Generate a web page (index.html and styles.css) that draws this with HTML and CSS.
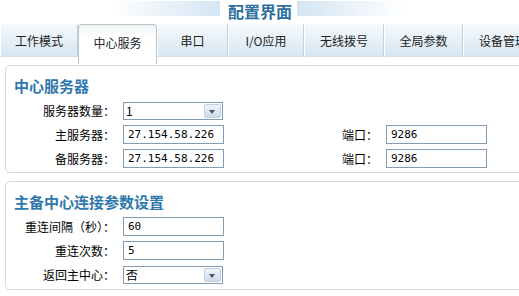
FILE: index.html
```html
<!DOCTYPE html>
<html lang="zh-CN">
<head>
    <meta charset="UTF-8">
    <title>配置界面</title>
    <link rel="stylesheet" href="styles.css">
</head>
<body>
    <div class="page">
        <header class="title-bar">
            <span class="title-fade left"></span>
            <h1>配置界面</h1>
            <span class="title-fade right"></span>
        </header>

        <nav class="tabs">
            <a class="tab">工作模式</a>
            <a class="tab active">中心服务</a>
            <a class="tab">串口</a>
            <a class="tab">I/O应用</a>
            <a class="tab">无线拨号</a>
            <a class="tab">全局参数</a>
            <a class="tab">设备管理</a>
        </nav>

        <section class="panel">
            <h2>中心服务器</h2>
            <div class="form-grid">
                <label>服务器数量：</label>
                <div class="select"><span class="select-value">1</span><span class="select-btn"></span></div>
                <span></span><span></span>

                <label>主服务器：</label>
                <input type="text" value="27.154.58.226">
                <label>端口：</label>
                <input type="text" value="9286">

                <label>备服务器：</label>
                <input type="text" value="27.154.58.226">
                <label>端口：</label>
                <input type="text" value="9286">
            </div>
        </section>

        <section class="panel">
            <h2>主备中心连接参数设置</h2>
            <div class="form-grid">
                <label>重连间隔（秒）：</label>
                <input type="text" value="60">
                <span></span><span></span>

                <label>重连次数：</label>
                <input type="text" value="5">
                <span></span><span></span>

                <label>返回主中心：</label>
                <div class="select"><span class="select-value">否</span><span class="select-btn"></span></div>
                <span></span><span></span>
            </div>
        </section>
    </div>
</body>
</html>
```

FILE: styles.css
```css
/* Page */
body {
    margin: 0;
    overflow: hidden;
    background: #ffffff;
    font-family: "Noto Sans CJK SC", "Noto Sans", sans-serif;
    font-size: 12px;
    color: #000;
}

.page {
    width: 640px;
}

/* Title */
.title-bar {
    display: flex;
    align-items: center;
    height: 17px;
    margin-top: 3px;
    padding-left: 110px;
}

.title-fade {
    height: 15px;
    align-self: flex-start;
    margin-top: -2px;
}

.title-fade.left {
    width: 110px;
    background: linear-gradient(to right, #ffffff, #d4e5f3);
}

.title-fade.right {
    width: 108px;
    background: linear-gradient(to right, #d4e5f3, #ffffff);
}

.title-bar h1 {
    margin: 0 5px 0 8px;
    font-size: 16px;
    line-height: 17px;
    font-weight: bold;
    color: #2c6e9e;
}

/* Tabs */
.tabs {
    display: grid;
    grid-template-columns: 78px 79px 71px 76px 80px 79px 80px;
    height: 33px;
    margin-top: 4px;
    align-items: start;
}

.tab {
    display: flex;
    align-items: center;
    justify-content: center;
    height: 33px;
    box-sizing: border-box;
    padding-top: 1px;
    background: linear-gradient(#f7fafc, #d6e6f2);
    border-left: 1px solid #ffffff;
    border-right: 1px solid #c4d1dc;
    border-bottom: 1px solid #d6dde3;
    color: #222;
    white-space: nowrap;
}

.tab.active {
    position: relative;
    z-index: 1;
    height: 40px;
    border: 1px solid #b9c3cb;
    border-bottom: none;
    border-radius: 4px 4px 0 0;
    background: linear-gradient(#f1f2f3, #ffffff 30%, #ffffff);
    padding-bottom: 6px;
}

/* Panels */
.panel {
    margin: 8px 0 0 5px;
    padding: 10px 8px 4px;
    border: 1px solid #d8d8d8;
    border-radius: 5px;
}

.panel + .panel {
    margin-top: 8px;
    padding-bottom: 5px;
}

.panel h2 {
    margin: 0 0 5px;
    font-size: 15px;
    line-height: 20px;
    font-weight: bold;
    color: #2f78ad;
}

.form-grid {
    display: grid;
    grid-template-columns: 109px 101px 162px 101px;
    grid-auto-rows: 19px;
    row-gap: 5px;
    align-items: center;
}

.form-grid label {
    text-align: right;
    padding-right: 8px;
    white-space: nowrap;
}

.form-grid input {
    width: 101px;
    height: 19px;
    box-sizing: border-box;
    margin: 0;
    padding: 0 4px;
    border: 1px solid #7f9db9;
    font-family: "DejaVu Sans Mono", monospace;
    font-size: 11px;
    color: #000;
    outline: none;
}

/* Fake XP style select */
.select {
    display: flex;
    width: 100px;
    height: 18px;
    box-sizing: border-box;
    border: 1px solid #7f9db9;
    background: #fff;
}

.select-value {
    flex: 1;
    padding-left: 2px;
    line-height: 16px;
}

.select-btn {
    position: relative;
    width: 17px;
    margin: 1px;
    border-radius: 2px;
    background: linear-gradient(#f0f4fb, #cdd9ea);
    border: 1px solid #c3d0e2;
    box-sizing: border-box;
}

.select-btn::after {
    content: "";
    position: absolute;
    left: 4px;
    top: 5px;
    border-left: 3.5px solid transparent;
    border-right: 3.5px solid transparent;
    border-top: 4px solid #4d5563;
}
```
